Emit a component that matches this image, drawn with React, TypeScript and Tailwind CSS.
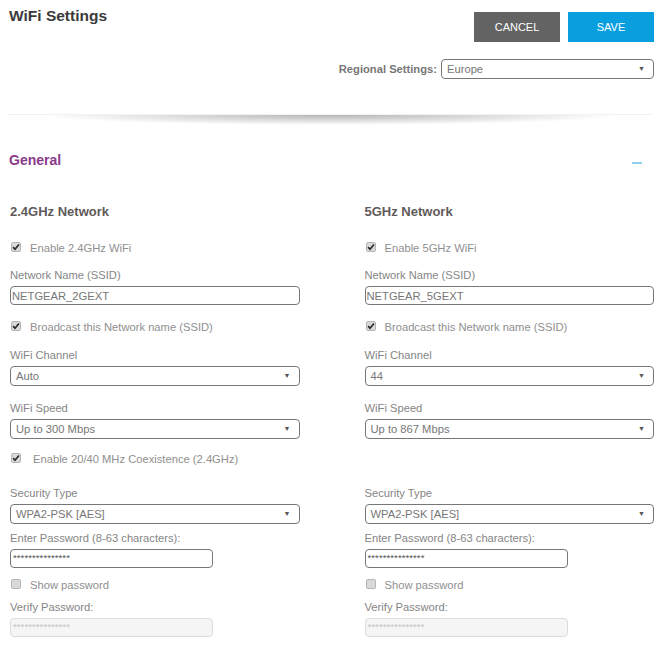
import React from "react";

const Check = ({ checked = true, label, gap = "ml-[9px]" }: { checked?: boolean; label: string; gap?: string }) => (
  <label className="flex items-center h-[14px]">
    <span className="ml-[1px] w-[10px] h-[10px] rounded-[2px] border border-[#b5b5b5] bg-[#d9d9d9] flex items-center justify-center -mt-[3px]">
      {checked && (
        <svg width="9" height="8" viewBox="0 0 9 8">
          <path d="M1.2 4.2 L3.4 6.6 L7.8 1.2" fill="none" stroke="#2a2a2a" strokeWidth="1.9" />
        </svg>
      )}
    </span>
    <span className={`${gap} text-[11.2px] text-[#8f8f8f]`}>{label}</span>
  </label>
);

const Field = ({ label, value }: { label: string; value: string }) => (
  <div>
    <div className="text-[11.2px] leading-[14px] text-[#858585]">{label}</div>
    <input
      readOnly
      value={value}
      className="mt-[4px] block w-full h-[19px] px-[1px] rounded-[4px] border border-[#777] text-[11.2px] text-[#777] outline-none"
    />
  </div>
);

const Dropdown = ({ value, className = "" }: { value: string; className?: string }) => (
  <div className={`flex items-center justify-between h-[20px] pl-[5px] pr-[8px] rounded-[4px] border border-[#777] bg-white text-[11.2px] text-[#777] ${className}`}>
    <span>{value}</span>
    <span className="text-[7px] text-[#555]">▼</span>
  </div>
);

const SelectField = ({ label, value }: { label: string; value: string }) => (
  <div>
    <div className="text-[11.2px] leading-[14px] text-[#858585]">{label}</div>
    <Dropdown value={value} className="mt-[4px]" />
  </div>
);

const Password = ({ disabled = false, label }: { disabled?: boolean; label: string }) => (
  <div>
    <div className="text-[11.2px] leading-[14px] text-[#858585]">{label}</div>
    <div
      className={`mt-[4px] flex items-center w-[203px] h-[19px] px-[2px] rounded-[4px] border text-[9.5px] tracking-[0.1px] ${
        disabled ? "border-[#dcdcdc] bg-[#f5f5f5] text-[#c4c4c4]" : "border-[#777] bg-white text-[#555]"
      }`}
    >
      ***************
    </div>
  </div>
);

const NetworkColumn = (props: {
  title: string;
  enable: string;
  ssid: string;
  channel: string;
  speed: string;
  coexistence?: boolean;
}) => (
  <div className="flex-1 flex flex-col">
    <h3 className="text-[13px] leading-[16px] font-bold text-[#5f5a5a]">{props.title}</h3>
    <div className="mt-[21px]">
      <Check label={props.enable} />
    </div>
    <div className="mt-[13px]">
      <Field label="Network Name (SSID)" value={props.ssid} />
    </div>
    <div className="mt-[15px]">
      <Check label="Broadcast this Network name (SSID)" />
    </div>
    <div className="mt-[14px]">
      <SelectField label="WiFi Channel" value={props.channel} />
    </div>
    <div className="mt-[15px]">
      <SelectField label="WiFi Speed" value={props.speed} />
    </div>
    <div className="mt-[13px] h-[14px]">
      {props.coexistence && <Check label="Enable 20/40 MHz Coexistence (2.4GHz)" gap="ml-[12px]" />}
    </div>
    <div className="mt-[20px]">
      <SelectField label="Security Type" value="WPA2-PSK [AES]" />
    </div>
    <div className="mt-[7px]">
      <Password label="Enter Password (8-63 characters):" />
    </div>
    <div className="mt-[10px]">
      <Check checked={false} label="Show password" />
    </div>
    <div className="mt-[8px]">
      <Password disabled label="Verify Password:" />
    </div>
  </div>
);

export default function App() {
  return (
    <div className="w-[660px] h-[646px] overflow-hidden bg-white font-['Liberation_Sans',Arial,sans-serif]">
      <div className="flex justify-between pt-[8px] pl-[9px] pr-[6px]">
        <h1 className="text-[15.5px] leading-[16px] font-bold text-[#3a3a3a]">WiFi Settings</h1>
        <div className="mt-[4px] flex gap-[8px]">
          <button className="w-[86px] h-[30px] bg-[#636363] text-white text-[11px]">CANCEL</button>
          <button className="w-[86px] h-[30px] bg-[#099fdf] text-white text-[11px]">SAVE</button>
        </div>
      </div>
      <div className="mt-[17px] flex items-center justify-end pr-[6px]">
        <span className="mr-[4px] text-[11.2px] font-bold text-[#777]">Regional Settings:</span>
        <Dropdown value="Europe" className="w-[213px]" />
      </div>
      <div className="mt-[35px] mx-[8px] h-[11px] border-t border-[#f2f2f2] bg-[radial-gradient(ellipse_45%_100%_at_50%_0%,rgba(90,90,90,0.45),rgba(255,255,255,0)_100%)]" />
      <div className="mt-[27px] flex items-center justify-between pl-[9px] pr-[18px]">
        <h2 className="text-[14px] leading-[16px] font-bold text-[#8a3a8a]">General</h2>
        <span className="mt-[6px] w-[10px] h-[2px] bg-[#8fd0ea]" />
      </div>
      <div className="mt-[36px] pl-[10px] pr-[6px] flex gap-[65px]">
        <NetworkColumn title="2.4GHz Network" enable="Enable 2.4GHz WiFi" ssid="NETGEAR_2GEXT" channel="Auto" speed="Up to 300 Mbps" coexistence />
        <NetworkColumn title="5GHz Network" enable="Enable 5GHz WiFi" ssid="NETGEAR_5GEXT" channel="44" speed="Up to 867 Mbps" />
      </div>
    </div>
  );
}
